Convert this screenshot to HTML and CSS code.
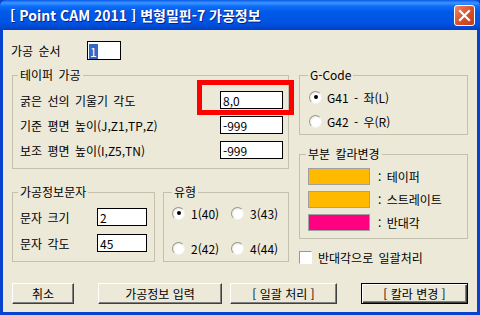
FILE: index.html
```html
<!DOCTYPE html>
<html lang="ko">
<head>
    <meta charset="UTF-8">
    <title>가공정보</title>
    <link rel="stylesheet" href="styles.css">
</head>
<body>
    <div class="window">
        <!-- Title bar -->
        <div class="titlebar">
            <span class="title">[ Point CAM 2011 ] 변형밀핀-7 가공정보</span>
            <span class="close-btn">
                <svg width="13" height="13" viewBox="0 0 13 13">
                    <path d="M2 2 L11 11 M11 2 L2 11" stroke="#fff" stroke-width="2.2" stroke-linecap="square"/>
                </svg>
            </span>
        </div>

        <div class="client">
            <div class="order-row">
                <span class="order-label">가공 순서</span>
                <span class="order-field"><span class="sel">1</span></span>
            </div>

            <div class="main">
                <div class="col-left">
                    <!-- Taper -->
                    <div class="group taper">
                        <div class="group-title">테이퍼 가공</div>
                        <div class="form-row first">
                            <span>굵은 선의 기울기 각도</span>
                            <span class="mark-wrap">
                                <input class="field" type="text" value="8,0">
                                <span class="mark"></span>
                            </span>
                        </div>
                        <div class="form-row">
                            <span>기준 평면 높이(J,Z1,TP,Z)</span>
                            <input class="field" type="text" value="-999">
                        </div>
                        <div class="form-row">
                            <span>보조 평면 높이(I,Z5,TN)</span>
                            <input class="field" type="text" value="-999">
                        </div>
                    </div>

                    <div class="lower">
                        <div class="group text-group">
                            <div class="group-title">가공정보문자</div>
                            <div class="text-row first">
                                <span class="text-label">문자 크기</span>
                                <input class="field small" type="text" value="2">
                            </div>
                            <div class="text-row">
                                <span class="text-label">문자 각도</span>
                                <input class="field small" type="text" value="45">
                            </div>
                        </div>

                        <div class="group type-group">
                            <div class="group-title">유형</div>
                            <div class="radio-grid">
                                <span class="radio"><span class="dot checked"></span>1(40)</span>
                                <span class="radio"><span class="dot"></span>3(43)</span>
                                <span class="radio"><span class="dot"></span>2(42)</span>
                                <span class="radio"><span class="dot"></span>4(44)</span>
                            </div>
                        </div>
                    </div>
                </div>

                <div class="col-right">
                    <div class="group gcode">
                        <div class="group-title">G-Code</div>
                        <span class="radio g-first"><span class="dot checked"></span>G41 - 좌(L)</span>
                        <span class="radio g-second"><span class="dot"></span>G42 - 우(R)</span>
                    </div>

                    <div class="group palette">
                        <div class="group-title">부분 칼라변경</div>
                        <div class="swatch-row first">
                            <span class="swatch orange"></span>: 테이퍼
                        </div>
                        <div class="swatch-row">
                            <span class="swatch orange"></span>: 스트레이트
                        </div>
                        <div class="swatch-row">
                            <span class="swatch pink"></span>: 반대각
                        </div>
                    </div>

                    <div class="check-row">
                        <span class="checkbox"></span>반대각으로 일괄처리
                    </div>
                </div>
            </div>

            <!-- Buttons -->
            <div class="buttons">
                <button class="btn btn-cancel">취소</button>
                <button class="btn btn-input">가공정보 입력</button>
                <button class="btn btn-batch">[ 일괄 처리 ]</button>
                <button class="btn btn-color default">[ 칼라 변경 ]</button>
            </div>
        </div>
    </div>
</body>
</html>
```

FILE: styles.css
```css
* {
    box-sizing: border-box;
}
body {
    margin: 0;
    font-family: "Noto Sans CJK KR", "Liberation Sans", sans-serif;
    font-size: 12px;
    word-spacing: 2px;
    color: #000;
}
.window {
    width: 480px;
    height: 315px;
    background-color: #0843d0;
    display: flex;
    flex-direction: column;
}
.titlebar {
    height: 30px;
    flex: none;
    display: flex;
    align-items: flex-start;
    padding-left: 10px;
    background: linear-gradient(#0a5ae8 0, #3d95ff 3px, #0e6ef8 6px, #0059e8 12px, #0055e3 22px, #0049d4 27px, #003dc5 30px);
    border-radius: 6px 6px 0 0;
}
.title {
    color: #fff;
    font-weight: bold;
    font-size: 14px;
    line-height: 16px;
    margin-top: 7px;
    word-spacing: 0;
    text-shadow: 1px 1px #0f1e89;
}
.close-btn {
    margin: 5px 5px 0 auto;
    width: 21px;
    height: 21px;
    border: 1px solid #fff;
    border-radius: 3px;
    background: linear-gradient(135deg, #f08a68, #d9512c 50%, #c23c17);
    display: flex;
    align-items: center;
    justify-content: center;
}
.client {
    flex: 1;
    margin: 0 3px 3px;
    background-color: #ece9d8;
    padding: 11px 0 0 9px;
}

/* order row */
.order-row {
    display: flex;
    align-items: center;
    height: 19px;
    margin-left: -1px;
}
.order-label {
    width: 76px;
}
.order-field {
    width: 34px;
    height: 19px;
    background-color: #fff;
    border: 1px solid #000;
    padding: 1px 0 0 1px;
}
.sel {
    display: inline-block;
    background-color: #316ac5;
    color: #fff;
    line-height: 15px;
    padding: 0 1px;
}

/* group boxes */
.main {
    display: grid;
    grid-template-columns: 277px 169px;
    column-gap: 10px;
    align-items: start;
    margin-top: 15px;
}
.group {
    border: 1px solid #c3c0ae;
}
.group-title {
    width: max-content;
    margin: -8px 0 0 -2px;
    padding: 0 2px;
    line-height: 14px;
    background-color: #ece9d8;
}
.field {
    font: inherit;
    width: 63px;
    height: 18px;
    padding: 0 2px;
    border: 1px solid #000;
    background-color: #fff;
    outline: none;
}
.field.small {
    width: 50px;
}

.taper {
    height: 94px;
    padding: 0 5px 0 7px;
}
.form-row {
    display: flex;
    justify-content: space-between;
    align-items: center;
    height: 18px;
    margin-top: 7px;
}
.form-row.first {
    margin-top: 9px;
}
.mark-wrap {
    position: relative;
    display: flex;
}
.mark {
    position: absolute;
    left: -23px;
    top: -11px;
    width: 97px;
    height: 35px;
    border: 5px solid #f00;
}

.lower {
    display: flex;
    gap: 8px;
    margin-top: 23px;
}
.text-group {
    width: 143px;
    height: 70px;
    padding: 0 5px 0 7px;
}
.text-row {
    display: flex;
    align-items: center;
    height: 18px;
    margin-top: 8px;
}
.text-row.first {
    margin-top: 9px;
}
.text-label {
    width: 77px;
}
.type-group {
    width: 126px;
    height: 70px;
    padding-left: 8px;
}
.type-group .group-title {
    margin-left: 0;
}
.radio-grid {
    display: grid;
    grid-template-columns: 59px 59px;
    row-gap: 21px;
    margin-top: 7px;
}
.radio {
    display: flex;
    align-items: center;
    gap: 6px;
    height: 14px;
    white-space: nowrap;
}
.dot {
    position: relative;
    width: 13px;
    height: 13px;
    border-radius: 50%;
    border: 1px solid;
    border-color: #9a9888 #f4f3ee #f4f3ee #9a9888;
    background: radial-gradient(circle at 60% 60%, #fff 45%, #dcdace 100%);
}
.dot.checked::after {
    content: "";
    position: absolute;
    left: 3.5px;
    top: 3.5px;
    width: 4px;
    height: 4px;
    border-radius: 50%;
    background-color: #000;
}

/* right column */
.gcode {
    height: 60px;
    padding-left: 9px;
}
.gcode .group-title {
    margin-left: -1px;
}
.gcode .radio {
    gap: 5px;
}
.g-first {
    margin-top: 8px;
}
.g-second {
    margin-top: 10px;
}
.palette {
    height: 85px;
    margin-top: 19px;
    padding-left: 8px;
}
.swatch-row {
    display: flex;
    align-items: center;
    gap: 8px;
    height: 17px;
    margin-top: 6px;
}
.swatch-row.first {
    margin-top: 7px;
}
.swatch {
    width: 62px;
    height: 17px;
    border: 1px solid #a0a0a0;
}
.orange {
    background-color: #ffba00;
}
.pink {
    background-color: #ff0080;
}
.check-row {
    display: flex;
    align-items: center;
    gap: 6px;
    height: 14px;
    margin-top: 11px;
}
.checkbox {
    width: 13px;
    height: 13px;
    border: 1px solid;
    border-color: #9a9888 #fff #fff #9a9888;
    background-color: #fff;
}

/* buttons */
.buttons {
    display: flex;
    margin-top: 19px;
}
.btn {
    font: inherit;
    height: 21px;
    padding: 0;
    background-color: #ece9d8;
    border: 1px solid;
    border-color: #fff #404040 #404040 #fff;
    box-shadow: inset -1px -1px #808080;
    cursor: pointer;
}
.btn.default {
    border-color: #000;
    box-shadow: inset 1px 1px #fff, inset -1px -1px #404040, inset -2px -2px #808080;
}
.btn-cancel {
    width: 62px;
}
.btn-input {
    width: 124px;
    margin-left: 24px;
}
.btn-batch {
    width: 107px;
    margin-left: 8px;
}
.btn-color {
    width: 107px;
    margin-left: 24px;
}
```
